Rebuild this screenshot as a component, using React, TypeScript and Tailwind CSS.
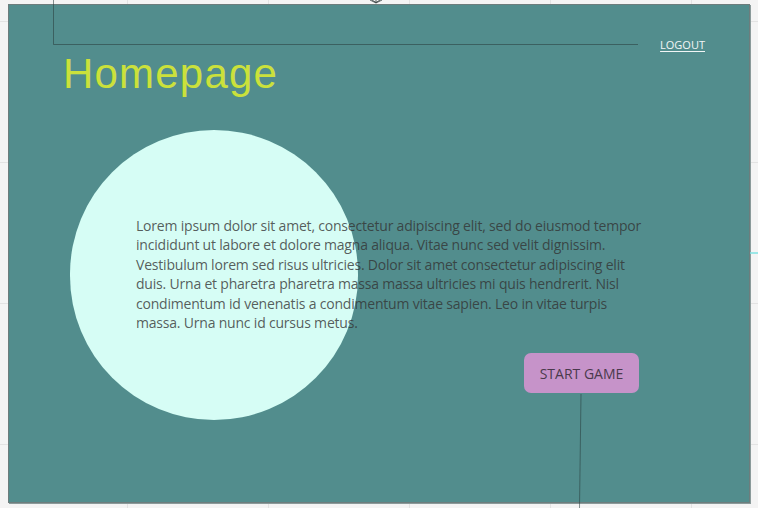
import React from "react";

export default function App() {
  return (
    <div className="relative w-[758px] h-[508px] overflow-hidden bg-[#f4f4f4] bg-[linear-gradient(to_right,#e3e3e3_1px,transparent_1px),linear-gradient(to_bottom,#e3e3e3_1px,transparent_1px)] bg-[size:141px_141px] bg-[position:127px_21px] pt-[4px] pl-[8px]">
      <div className="relative w-[742px] h-[499px] border border-[#6d7d7d] bg-[#528d8d] shadow-[1px_1px_0_#8a9a9a] overflow-hidden">
        {/* circle decoration */}
        <div className="absolute left-[61px] top-[125px] w-[288px] h-[290px] rounded-full bg-[#d6fdf5]" />

        <div className="relative flex flex-col">
          <div className="flex justify-end h-[48px] pt-[33px] pr-[44px]">
            <a
              href="#"
              className="text-[11px] leading-[14px] text-[#f2f6f6] underline underline-offset-2 font-['Open_Sans',sans-serif]"
            >
              LOGOUT
            </a>
          </div>
          <h1 className="ml-[54px] mt-[0px] h-[42px] text-[42px] leading-[42px] tracking-[1.2px] text-[#cbe13b] font-['Liberation_Sans',Arial,sans-serif]">
            Homepage
          </h1>
          <p className="ml-[127px] mt-[121px] w-[512px] text-[14px] leading-[19.4px] tracking-[-0.2px] text-[#333333]/80 font-['Open_Sans',sans-serif]">
            Lorem ipsum dolor sit amet, consectetur adipiscing elit, sed do eiusmod tempor incididunt ut labore et dolore magna aliqua. Vitae nunc sed velit dignissim. Vestibulum lorem sed risus ultricies. Dolor sit amet consectetur adipiscing elit duis. Urna et pharetra pharetra massa massa ultricies mi quis hendrerit. Nisl condimentum id venenatis a condimentum vitae sapien. Leo in vitae turpis massa. Urna nunc id cursus metus.
          </p>
          <div className="flex justify-end pr-[110px] mt-[21px]">
            <button className="w-[115px] h-[40px] rounded-[7px] bg-[#c693c9] text-[14px] text-[#4a3a4c] font-['Open_Sans',sans-serif]">
              START GAME
            </button>
          </div>
        </div>
      </div>

      {/* connectors overlay */}
      <svg className="absolute inset-0 pointer-events-none" width="758" height="508">
        <polyline points="53.5,0 53.5,44.5 638,44.5" fill="none" stroke="rgba(40,60,60,0.55)" strokeWidth="1" />
        <line x1="581" y1="394" x2="579.5" y2="508" stroke="rgba(40,60,60,0.55)" strokeWidth="1" />
        <path d="M370 0 L376 3 L382 0 M376 3 L376 0 M372 0 L376 2.5 L380 0" fill="none" stroke="rgba(50,60,60,0.8)" strokeWidth="1" />
        <line x1="750" y1="253" x2="758" y2="253" stroke="#7fe3e3" strokeWidth="1.5" />
      </svg>
    </div>
  );
}
